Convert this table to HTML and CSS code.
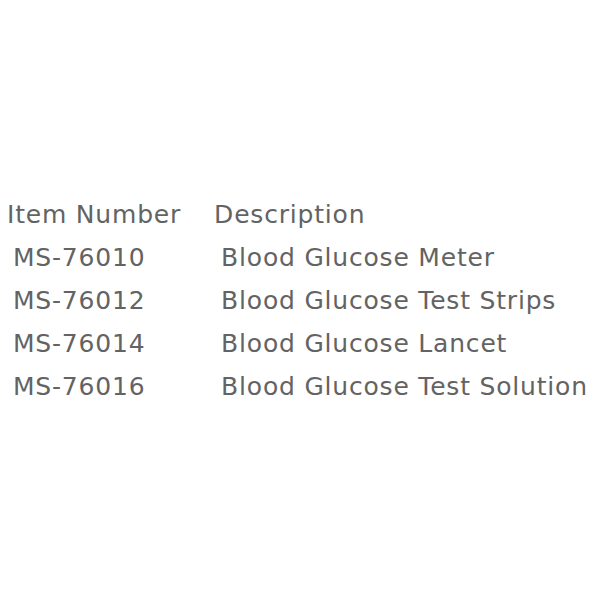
FILE: index.html
```html
<!DOCTYPE html>
<html>
<head>
<meta charset="utf-8">
<link rel="stylesheet" href="styles.css">
</head>
<body>
<main class="wrap">
  <table class="items">
    <thead>
      <tr><th class="c1">Item Number</th><th class="c2">Description</th></tr>
    </thead>
    <tbody>
      <tr><td class="c1">MS-76010</td><td class="c2">Blood Glucose Meter</td></tr>
      <tr><td class="c1">MS-76012</td><td class="c2">Blood Glucose Test Strips</td></tr>
      <tr><td class="c1">MS-76014</td><td class="c2">Blood Glucose Lancet</td></tr>
      <tr><td class="c1">MS-76016</td><td class="c2">Blood Glucose Test Solution</td></tr>
    </tbody>
  </table>
</main>
</body>
</html>
```
FILE: styles.css
```css
html, body {
  margin: 0;
  background: #ffffff;
}
.wrap {
  padding: 193px 0 0 7px;
}
.items {
  border-collapse: collapse;
  font-family: "DejaVu Sans", sans-serif;
  font-size: 25px;
  letter-spacing: 0.8px;
  color: #636363;
}
.items th {
  font-weight: normal;
  text-align: left;
  height: 43px;
  padding: 0;
}
.items th.c1 { padding-right: 33px; }
.items td {
  height: 43px;
  padding: 0 0 0 6px;
}
.items td.c2 { padding-left: 7px; }
```
